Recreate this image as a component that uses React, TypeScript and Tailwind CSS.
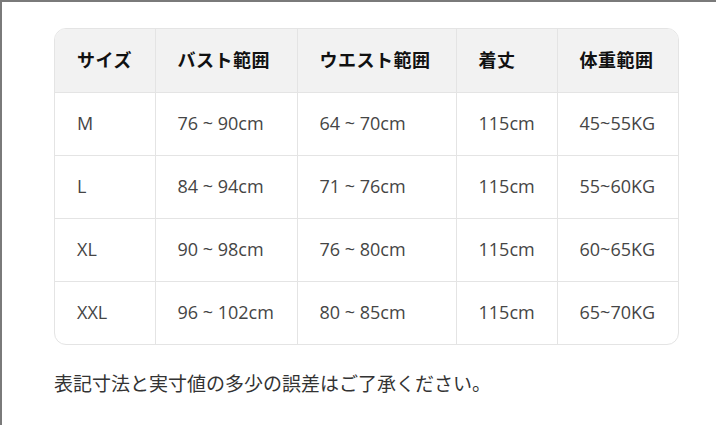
import React from 'react';

const rows = [
  ['M', '76 ~ 90cm', '64 ~ 70cm', '115cm', '45~55KG'],
  ['L', '84 ~ 94cm', '71 ~ 76cm', '115cm', '55~60KG'],
  ['XL', '90 ~ 98cm', '76 ~ 80cm', '115cm', '60~65KG'],
  ['XXL', '96 ~ 102cm', '80 ~ 85cm', '115cm', '65~70KG'],
];

const headers = ['サイズ', 'バスト範囲', 'ウエスト範囲', '着丈', '体重範囲'];
const widths = ['w-[100px]', 'w-[142px]', 'w-[159px]', 'w-[101px]', 'w-[123px]'];

export default function App() {
  return (
    <div
      className="h-[425px] w-[716px] border-l-2 border-t-2 border-[#7a7a7a] bg-white pl-[52px] pt-[26px]"
      style={{ fontFamily: '"Open Sans", "Noto Sans CJK JP", sans-serif' }}
    >
      <div className="w-[625px] overflow-hidden rounded-[12px] border border-[#e4e4e4]">
        <table className="w-full table-fixed border-collapse">
          <colgroup>
            {widths.map((w, i) => (
              <col key={i} className={w} />
            ))}
          </colgroup>
          <thead>
            <tr className="h-[63px] bg-[#f2f2f2]">
              {headers.map((h, i) => (
                <th
                  key={h}
                  className={`px-[22px] text-left text-[18px] font-bold tracking-[0.5px] text-[#111] ${i > 0 ? 'border-l border-[#e4e4e4]' : ''}`}
                >
                  {h}
                </th>
              ))}
            </tr>
          </thead>
          <tbody>
            {rows.map((r) => (
              <tr key={r[0]} className="h-[63px] border-t border-[#e4e4e4]">
                {r.map((c, i) => (
                  <td
                    key={i}
                    className={`px-[22px] text-[18px] text-[#454545] ${i > 0 ? 'border-l border-[#e4e4e4]' : ''}`}
                  >
                    {c}
                  </td>
                ))}
              </tr>
            ))}
          </tbody>
        </table>
      </div>
      <p className="mt-[25px] text-[19px] text-[#333]">表記寸法と実寸値の多少の誤差はご了承ください。</p>
    </div>
  );
}
